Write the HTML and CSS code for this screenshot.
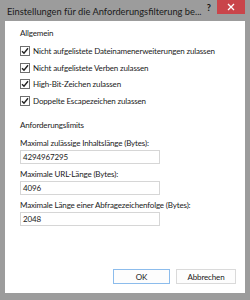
FILE: index.html
```html
<!DOCTYPE html>
<html lang="de">
<head>
  <meta charset="UTF-8">
  <title>Einstellungen</title>
  <link rel="stylesheet" href="styles.css">
</head>
<body>
  <div class="dialog">
    <div class="titlebar">
      <span class="title">Einstellungen für die Anforderungsfilterung be...</span>
      <span class="help">?</span>
      <span class="close">
        <svg width="8" height="8" viewBox="0 0 8 8"><path d="M1 1 L7 7 M7 1 L1 7" stroke="#fff" stroke-width="1.3"/></svg>
      </span>
    </div>

    <div class="content">
      <div class="group-title">Allgemein</div>

      <div class="check-list">
        <label class="check"><span class="box"><svg width="8" height="8" viewBox="0 0 8 8"><path d="M1 4.2 L3 6.3 L7 1.3" fill="none" stroke="#222" stroke-width="1.4"/></svg></span>Nicht aufgelistete Dateinamenerweiterungen zulassen</label>
        <label class="check"><span class="box"><svg width="8" height="8" viewBox="0 0 8 8"><path d="M1 4.2 L3 6.3 L7 1.3" fill="none" stroke="#222" stroke-width="1.4"/></svg></span>Nicht aufgelistete Verben zulassen</label>
        <label class="check"><span class="box"><svg width="8" height="8" viewBox="0 0 8 8"><path d="M1 4.2 L3 6.3 L7 1.3" fill="none" stroke="#222" stroke-width="1.4"/></svg></span>High-Bit-Zeichen zulassen</label>
        <label class="check"><span class="box"><svg width="8" height="8" viewBox="0 0 8 8"><path d="M1 4.2 L3 6.3 L7 1.3" fill="none" stroke="#222" stroke-width="1.4"/></svg></span>Doppelte Escapezeichen zulassen</label>
      </div>

      <div class="group-title limits">Anforderungslimits</div>

      <div class="field">
        <div class="field-label">Maximal zulässige Inhaltslänge (Bytes):</div>
        <div class="input">4294967295</div>
      </div>
      <div class="field">
        <div class="field-label">Maximale URL-Länge (Bytes):</div>
        <div class="input">4096</div>
      </div>
      <div class="field">
        <div class="field-label">Maximale Länge einer Abfragezeichenfolge (Bytes):</div>
        <div class="input">2048</div>
      </div>

      <div class="buttons">
        <button class="btn default">OK</button>
        <button class="btn">Abbrechen</button>
      </div>
    </div>
  </div>
</body>
</html>
```

FILE: styles.css
```css
body {
  margin: 0;
  font-family: Lato, "Open Sans", sans-serif;
  color: #1a1a1a;
}

.dialog {
  width: 250px;
  height: 300px;
  background: #9c9c9c;
  display: flex;
  flex-direction: column;
}

.titlebar {
  height: 21px;
  display: flex;
  align-items: flex-start;
}

.title {
  flex: 1;
  font-size: 9.3px;
  line-height: 24px;
  padding-left: 7px;
  color: #1a1a1a;
  white-space: nowrap;
  overflow: hidden;
}

.help {
  font-size: 9px;
  font-weight: bold;
  line-height: 16px;
  margin-right: 6px;
  color: #111;
}

.close {
  width: 28px;
  height: 14px;
  margin-right: 5px;
  background: #c9454a;
  display: flex;
  align-items: center;
  justify-content: center;
}

.content {
  flex: 1;
  margin: 0 5px 7px;
  background: #fff;
  padding: 5px 0 0 15px;
  font-size: 8px;
  letter-spacing: -0.15px;
  display: flex;
  flex-direction: column;
}

.group-title {
  line-height: 14px;
  margin-bottom: 3px;
}

.check-list {
  display: flex;
  flex-direction: column;
}

.check {
  display: flex;
  align-items: center;
  height: 16.5px;
  white-space: nowrap;
}

.box {
  width: 8px;
  height: 8px;
  border: 1px solid #6f6f6f;
  margin-right: 3px;
  display: flex;
  align-items: center;
  justify-content: center;
}

.limits {
  margin-top: 9px;
  margin-bottom: 4px;
}

.field {
  margin-bottom: 3px;
}

.field-label {
  line-height: 14px;
}

.input {
  width: 136px;
  height: 12px;
  border: 1px solid #d6d6d6;
  padding-left: 2px;
  line-height: 12px;
}

.buttons {
  margin-top: auto;
  margin-bottom: 9px;
  margin-right: 9px;
  display: flex;
  justify-content: flex-end;
  gap: 6px;
}

.btn {
  font-family: inherit;
  font-size: 8px;
  letter-spacing: -0.15px;
  color: #1a1a1a;
  width: 60px;
  height: 15px;
  padding: 0;
  background: #fdfdfd;
  border: 1px solid #dadada;
}

.btn.default {
  width: 57px;
  border-color: #8cbcec;
}
```
